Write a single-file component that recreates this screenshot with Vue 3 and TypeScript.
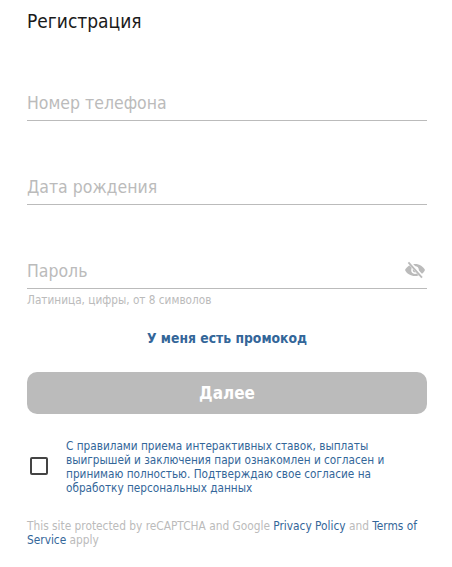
<script setup lang="ts">
const fields = [
  { label: 'Номер телефона' },
  { label: 'Дата рождения' },
  { label: 'Пароль', eye: true, hint: 'Латиница, цифры, от 8 символов' },
]
</script>

<template>
  <div class="page">
    <h1 class="title">Регистрация</h1>
    <div class="fields">
      <div v-for="f in fields" :key="f.label" class="field">
        <div class="field__row">
          <span class="field__label">{{ f.label }}</span>
          <svg v-if="f.eye" class="field__eye" width="22" height="18" viewBox="0 0 22 18">
            <path fill="#bbb" d="M11 3C6.4 3 2.6 5.6 1 9.1c1.6 3.5 5.4 6 10 6s8.4-2.5 10-6C19.400 5.600 15.600 3 11 3z" />
            <circle cx="11" cy="9.100" r="3.800" fill="#fff" />
            <circle cx="11" cy="9.100" r="2.300" fill="#bbb" />
            <path d="M5.200 1.200 18.800 16.400" stroke="#fff" stroke-width="3.600" />
            <path d="M4.400 1.400 18 16.600" stroke="#bbb" stroke-width="1.800" />
          </svg>
        </div>
        <div v-if="f.hint" class="field__hint">{{ f.hint }}</div>
      </div>
    </div>
    <a class="promo">У меня есть промокод</a>
    <button class="next">Далее</button>
    <div class="agree">
      <span class="agree__box" />
      <p class="agree__text">С правилами приема интерактивных ставок, выплаты выигрышей и заключения пари ознакомлен и согласен и принимаю полностью. Подтверждаю свое согласие на обработку персональных данных</p>
    </div>
    <p class="captcha">This site protected by reCAPTCHA and Google <a>Privacy Policy</a> and <a>Terms of</a> <a>Service</a> apply</p>
  </div>
</template>

<style>
body { background: #fff; }
</style>

<style scoped>
.page { width: 400px; padding: 0 25px 0 27px; font-family: "DejaVu Sans Condensed", "DejaVu Sans", sans-serif; }
.title { margin: 0; padding-top: 9px; font-size: 19px; line-height: 24px; font-weight: 400; color: #1a1a1a; }
.fields { margin-top: 51px; }
.field { margin-bottom: 47px; }
.field:last-child { margin-bottom: 0; }
.field__row { display: flex; justify-content: space-between; align-items: center; height: 36px; border-bottom: 1px solid #bbb; box-sizing: content-box; }
.field__label { padding-top: 2px; font-size: 17.5px; color: #bbb; }
.field__eye { margin-right: 1px; }
.field__hint { margin-top: 4px; font-size: 11.7px; line-height: 14px; color: #bbb; }
.promo { display: block; margin-top: 22px; text-align: center; font-size: 13.8px; line-height: 18px; font-weight: 700; color: #336699; }
.next { display: block; width: 100%; height: 42px; margin-top: 25px; border: 0; border-radius: 10px; background: #bbb; color: #fff; font: 700 17px "DejaVu Sans Condensed", "DejaVu Sans", sans-serif; }
.agree { display: flex; align-items: center; margin-top: 25px; }
.agree__box { flex: none; width: 14px; height: 14px; margin: 0 0 2px 3px; border: 2px solid #444; border-radius: 2px; }
.agree__text { margin: 0 0 0 18px; font-size: 11.7px; line-height: 14px; color: #336699; }
.captcha { margin: 24px 0 0; font-size: 11.8px; line-height: 14px; color: #bbb; }
.captcha a { color: #336699; }
</style>
